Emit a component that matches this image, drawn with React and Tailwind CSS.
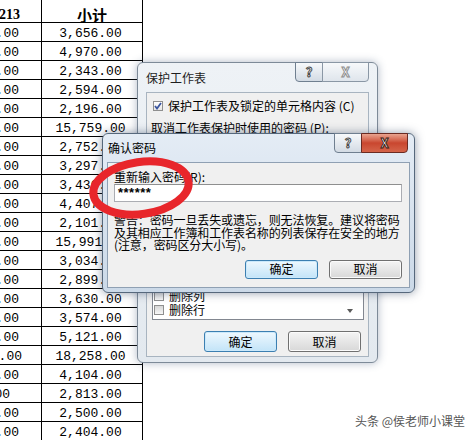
import React from "react";

// spreadsheet rows: tail of the left column + subtotal column
const rows = [
  { a: "1,230.00", b: "3,656.00", pr: "pr-[22px]" },
  { a: "1,230.00", b: "4,970.00", pr: "pr-[22px]" },
  { a: "1,230.00", b: "2,343.00", pr: "pr-[22px]" },
  { a: "1,230.00", b: "2,594.00", pr: "pr-[22px]" },
  { a: "1,230.00", b: "2,196.00", pr: "pr-[22px]" },
  { a: "1,230.00", b: "15,759.00", pr: "pr-[22px]" },
  { a: "1,230.00", b: "2,752.00", pr: "pr-[22px]" },
  { a: "1,230.00", b: "3,297.00", pr: "pr-[22px]" },
  { a: "1,230.00", b: "3,436.00", pr: "pr-[22px]" },
  { a: "1,230.00", b: "4,407.00", pr: "pr-[22px]" },
  { a: "1,230.00", b: "2,101.00", pr: "pr-[22px]" },
  { a: "1,230.00", b: "15,991.00", pr: "pr-[22px]" },
  { a: "1,230.00", b: "3,034.00", pr: "pr-[22px]" },
  { a: "1,230.00", b: "2,899.00", pr: "pr-[22px]" },
  { a: "1,230.00", b: "3,630.00", pr: "pr-[22px]" },
  { a: "1,230.00", b: "3,574.00", pr: "pr-[22px]" },
  { a: "1,230.00", b: "5,121.00", pr: "pr-[22px]" },
  { a: "12,230.00", b: "18,258.00", pr: "pr-[19px]" },
  { a: "1,230.00", b: "4,104.00", pr: "pr-[22px]" },
  { a: "830.00", b: "2,813.00", pr: "pr-[31px]" },
  { a: "1,230.00", b: "2,500.00", pr: "pr-[22px]" },
  { a: "1,230.00", b: "2,404.00", pr: "pr-[22px]" },
];

const Check = ({ checked }) => (
  <span
    className={`flex h-[10px] w-[10px] shrink-0 items-center justify-center border border-[#8f8f8f] ${
      checked
        ? "bg-gradient-to-b from-white to-[#e6e6e6]"
        : "bg-gradient-to-b from-[#d6d6d6] to-[#f7f7f7]"
    }`}
  >
    {checked && (
      <svg width="8" height="8" viewBox="0 0 8 8">
        <path d="M1 4 L3 6.5 L7 1" fill="none" stroke="#3b56a0" strokeWidth="1.8" />
      </svg>
    )}
  </span>
);

const Button = ({ children, primary }) => (
  <button
    className={`flex h-full w-[73px] items-center justify-center rounded-[3px] border text-[12px] text-black ${
      primary
        ? "border-[#3c7fb1] bg-gradient-to-b from-[#eef8fe] to-[#c3e4f8] shadow-[inset_0_0_0_1px_#cbe9fb]"
        : "border-[#707070] bg-gradient-to-b from-[#f4f4f4] to-[#d8d8d8] shadow-[inset_0_0_0_1px_#fbfbfb]"
    }`}
  >
    {children}
  </button>
);

const CaptionButtons = ({ active }) => (
  <div className="-mt-px flex h-[20px] shrink-0">
    <div className="flex w-[28px] items-center justify-center rounded-bl-[4px] border border-[#6f7f90] bg-gradient-to-b from-[#f7f9fb] to-[#d3dbe4] text-[13px] font-bold text-white [-webkit-text-stroke:1px_#4a4a4a]">
      ?
    </div>
    <div
      className={`-ml-px flex w-[47px] items-center justify-center rounded-br-[4px] border text-[13px] font-bold ${
        active
          ? "border-[#6b2b22] bg-gradient-to-b from-[#e8a38f] via-[#c9462f] to-[#d4644a] text-white [-webkit-text-stroke:1px_#3a1a14]"
          : "border-[#8a97a5] bg-gradient-to-b from-[#f7f9fb] to-[#dfe5ec] text-white [-webkit-text-stroke:1px_#8d8d8d]"
      }`}
    >
      X
    </div>
  </div>
);

export default function App() {
  return (
    <div className="relative h-[440px] w-[474px] overflow-hidden bg-white font-['Noto_Sans_CJK_SC',sans-serif]">
      {/* sheet */}
      <div className="w-[143px] font-['Liberation_Mono',monospace] text-[13px] text-black">
        <div className="flex h-[23px] border-b border-black">
          <div className="flex w-[42px] items-start justify-end overflow-hidden whitespace-nowrap border-r border-black pr-[21px] pt-[7px] font-['Liberation_Serif',serif] text-[14px] font-bold leading-[15px]">
            201213
          </div>
          <div className="flex flex-1 items-start justify-center border-r border-black pt-[7px] font-['Noto_Sans_CJK_SC',sans-serif] text-[15px] font-bold leading-[15px]">
            小计
          </div>
        </div>
        {rows.map((r, i) => (
          <div key={i} className="flex h-[19px] border-b border-black">
            <div
              className={`flex w-[42px] items-end justify-end overflow-hidden whitespace-nowrap border-r border-black leading-[15px] ${r.pr}`}
            >
              {r.a}
            </div>
            <div className="flex flex-1 items-end justify-center border-r border-black pr-[3px] leading-[15px]">
              {r.b}
            </div>
          </div>
        ))}
      </div>

      {/* 保护工作表 (inactive) */}
      <div className="absolute left-[137px] top-[62px] flex h-[301px] w-[241px] flex-col rounded-[6px] border border-[#7d8a98] bg-gradient-to-b from-[#eef2f6] to-[#e3e9ef] px-[8px] pb-[5px] shadow-[0_0_8px_rgba(80,100,130,0.45)]">
        <div className="flex h-[29px] items-start justify-between">
          <span className="mt-[8px] text-[12px] leading-[14px] text-[#1e1e1e]">保护工作表</span>
          <CaptionButtons />
        </div>
        <div className="flex flex-1 flex-col border border-[#a8b4c0] bg-[#f0f0f0] pl-[6px] text-[12px] leading-[14px] text-black">
          <div className="mt-[6px] flex items-center gap-[5px]">
            <Check checked />
            <span>保护工作表及锁定的单元格内容 (C)</span>
          </div>
          <div className="mt-[8px] -ml-[2px]">取消工作表保护时使用的密码 (P):</div>
          <div className="mt-[4px] h-[20px] w-[210px] border border-[#abadb3] bg-white" />
          <div className="mt-[6px]">允许此工作表的所有用户进行(O):</div>
          <div className="mt-auto ml-[-1px] mr-[4px] flex h-[92px] border border-[#828790] bg-white">
            <div className="flex flex-1 flex-col justify-end pb-[2px] pl-[1px]">
              {["设置行格式", "插入列", "插入行", "插入超链接", "删除列", "删除行"].map((t) => (
                <div key={t} className="flex h-[14px] items-center gap-[5px]">
                  <Check />
                  <span>{t}</span>
                </div>
              ))}
            </div>
            <div className="flex w-[26px] items-end justify-center pb-[6px]">
              <svg width="6" height="4" viewBox="0 0 6 4">
                <path d="M0 0 H6 L3 4 Z" fill="#5a5a5a" />
              </svg>
            </div>
          </div>
          <div className="mb-[4px] mt-[11px] flex h-[21px] justify-end gap-[11px] pr-[7px]">
            <Button primary>确定</Button>
            <Button>取消</Button>
          </div>
        </div>
      </div>

      {/* 确认密码 (active) */}
      <div className="absolute left-[102px] top-[133px] flex h-[160px] w-[313px] flex-col rounded-[6px] border border-[#56687c] bg-gradient-to-b from-[#e4ecf5] to-[#cbd9e8] px-[4px] pb-[4px] shadow-[0_0_10px_rgba(40,60,90,0.5)]">
        <div className="flex h-[28px] items-start justify-between">
          <span className="ml-[1px] mt-[7px] text-[12px] leading-[14px] text-black">确认密码</span>
          <div className="mr-[2px]">
            <CaptionButtons active />
          </div>
        </div>
        <div className="flex flex-1 flex-col border border-[#8fa0b3] bg-[#f0f0f0] pl-[6px] text-[12px] text-black">
          <div className="mt-[7px] leading-[13px]">重新输入密码(R):</div>
          <div className="mt-[1px] flex h-[18px] w-[288px] items-center border border-[#abadb3] border-t-[#8e8f8f] bg-white pl-[3px] font-['Liberation_Sans',sans-serif] text-[13px] font-bold tracking-[0.5px]">
            ******
          </div>
          <div className="mt-[12px] whitespace-nowrap text-[12px] leading-[12.5px] tracking-[-0.1px]">
            <div>警告：密码一旦丢失或遗忘，则无法恢复。建议将密码</div>
            <div>及其相应工作簿和工作表名称的列表保存在安全的地方</div>
            <div>(注意，密码区分大小写)。</div>
          </div>
          <div className="mt-[8px] flex h-[19px] justify-end gap-[11px] pr-[7px]">
            <Button primary>确定</Button>
            <Button>取消</Button>
          </div>
        </div>
      </div>

      {/* red marker ring */}
      <svg className="pointer-events-none absolute left-[80px] top-[148px]" width="130" height="80" viewBox="0 0 130 80">
        <ellipse cx="61" cy="40" rx="48" ry="26" fill="none" stroke="#e8262b" strokeWidth="8" transform="rotate(-8 61 40)" />
      </svg>

      {/* watermark */}
      <div className="absolute left-[355px] top-[413px] whitespace-nowrap text-[12px] leading-[16px] text-[#555] [text-shadow:0_0_2px_#fff]">
        头条 @侯老师小课堂
      </div>
    </div>
  );
}
